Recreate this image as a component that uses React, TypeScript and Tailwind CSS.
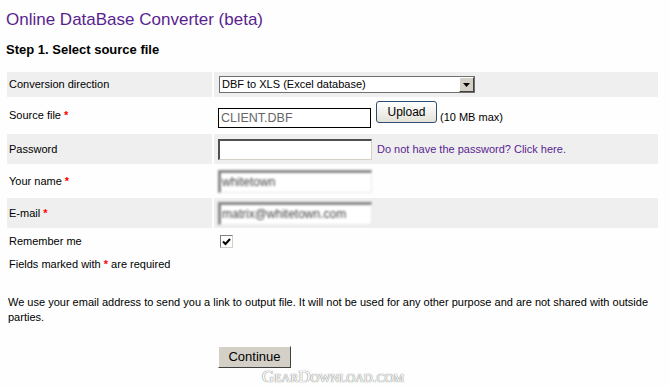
import React from "react";

const font = { fontFamily: '"Liberation Sans", Arial, sans-serif' };

function Star() {
  return <span className="text-[#ff0000] font-bold"> *</span>;
}

function Row({
  gray,
  h,
  label,
  children,
}: {
  gray?: boolean;
  h: string;
  label: React.ReactNode;
  children?: React.ReactNode;
}) {
  const bg = gray ? "bg-[#efefef]" : "bg-transparent";
  return (
    <div className={`flex gap-[2px] ${h}`}>
      <div className={`w-[205px] shrink-0 flex items-center pl-[2px] ${bg}`}>{label}</div>
      <div className={`flex-1 flex items-center pl-[4px] ${bg}`}>{children}</div>
    </div>
  );
}

function SunkenInput({ value, blur }: { value: string; blur?: boolean }) {
  return (
    <div
      className={`w-[154px] h-[23px] bg-white border-t-[3px] border-l-[3px] border-b border-r border-t-[#8a8a8a] border-l-[#8a8a8a] border-b-[#e8e8e8] border-r-[#e8e8e8] flex items-center pl-[1px] text-[12px] text-[#444] ${
        blur ? "blur-[1px]" : ""
      }`}
    >
      {value}
    </div>
  );
}

export default function App() {
  return (
    <div className="w-[670px] h-[386px] bg-[#fdfefd] text-[11px] text-black overflow-hidden" style={font}>
      <div className="pl-[6px] pt-[10px] text-[17px] leading-[20px] text-[#5a1f8f]">
        Online DataBase Converter (beta)
      </div>
      <div className="pl-[6px] pt-[12px] text-[13px] leading-[16px] font-bold">Step 1. Select source file</div>

      <div className="ml-[7px] w-[651px] mt-[14px] flex flex-col">
        <Row gray h="h-[25px]" label="Conversion direction">
          <div className="ml-[1px] w-[256px] h-[17px] bg-white border border-[#6f6f6f] flex items-center">
            <span className="flex-1 pl-[2px] text-[11px]">DBF to XLS (Excel database)</span>
            <div className="w-[15px] h-[15px] bg-[#d4d0c8] border border-t-white border-l-white border-b-[#404040] border-r-[#404040] flex items-center justify-center">
              <svg width="7" height="4" viewBox="0 0 7 4">
                <path d="M0 0h7L3.5 4z" fill="#000" />
              </svg>
            </div>
          </div>
        </Row>
        <Row h="h-[37px]" label={<span>Source file<Star /></span>}>
          <div className="self-end mb-[6px] w-[153px] h-[20px] bg-white border border-black flex items-center pl-[2px] text-[12.5px] text-[#666]">
            CLIENT.DBF
          </div>
          <div className="self-start mt-[4px] ml-[5px] w-[61px] h-[22px] rounded-[3px] border border-[#2d4d75] bg-gradient-to-b from-white to-[#e4e2d8] flex items-center justify-center text-[12px] text-black">
            Upload
          </div>
          <span className="self-end mb-[9px] ml-[3px] text-[11px]">(10 MB max)</span>
        </Row>
        <Row gray h="h-[30px]" label="Password">
          <div className="w-[154px] h-[21px] bg-white border-t-2 border-l-2 border-b border-r border-t-[#505050] border-l-[#505050] border-b-[#d4d0c8] border-r-[#d4d0c8]" />
          <span className="ml-[5px] text-[#5a1f8f]">Do not have the password? Click here.</span>
        </Row>
        <Row h="h-[34px]" label={<span>Your name<Star /></span>}>
          <SunkenInput value="whitetown" blur />
        </Row>
        <Row gray h="h-[30px]" label={<span>E-mail<Star /></span>}>
          <SunkenInput value="matrix@whitetown.com" blur />
        </Row>
        <Row h="h-[27px]" label="Remember me">
          <div className="ml-[2px] w-[13px] h-[13px] bg-white border border-t-[#808080] border-l-[#808080] border-b-[#d4d0c8] border-r-[#d4d0c8] flex items-center justify-center">
            <svg width="9" height="8" viewBox="0 0 9 8">
              <path d="M1 3.5l2.5 2.5L8 1" stroke="#000" strokeWidth="2" fill="none" />
            </svg>
          </div>
        </Row>
        <div className="pl-[2px] h-[18px] flex items-center">
          <span>
            Fields marked with <span className="text-[#ff0000] font-bold">*</span> are required
          </span>
        </div>
      </div>

      <p className="ml-[8px] w-[645px] mt-[22px] text-[11px] leading-[15px]">
        We use your email address to send you a link to output file. It will not be used for any other purpose and are
        not shared with outside parties.
      </p>

      <div className="pl-[218px] mt-[21px]">
        <div className="w-[73px] h-[22px] bg-[#d4d0c8] border border-t-white border-l-white border-b-[#404040] border-r-[#404040] flex items-center justify-center text-[13px]">
          Continue
        </div>
      </div>
      <div
        className="pl-[262px] mt-[1px] text-[17px] leading-[16px] text-white [font-variant:small-caps] [text-shadow:0_0_1px_#777,0_0_1px_#777]"
        style={{ fontFamily: '"Liberation Serif", serif' }}
      >
        GearDownload.com
      </div>
    </div>
  );
}
